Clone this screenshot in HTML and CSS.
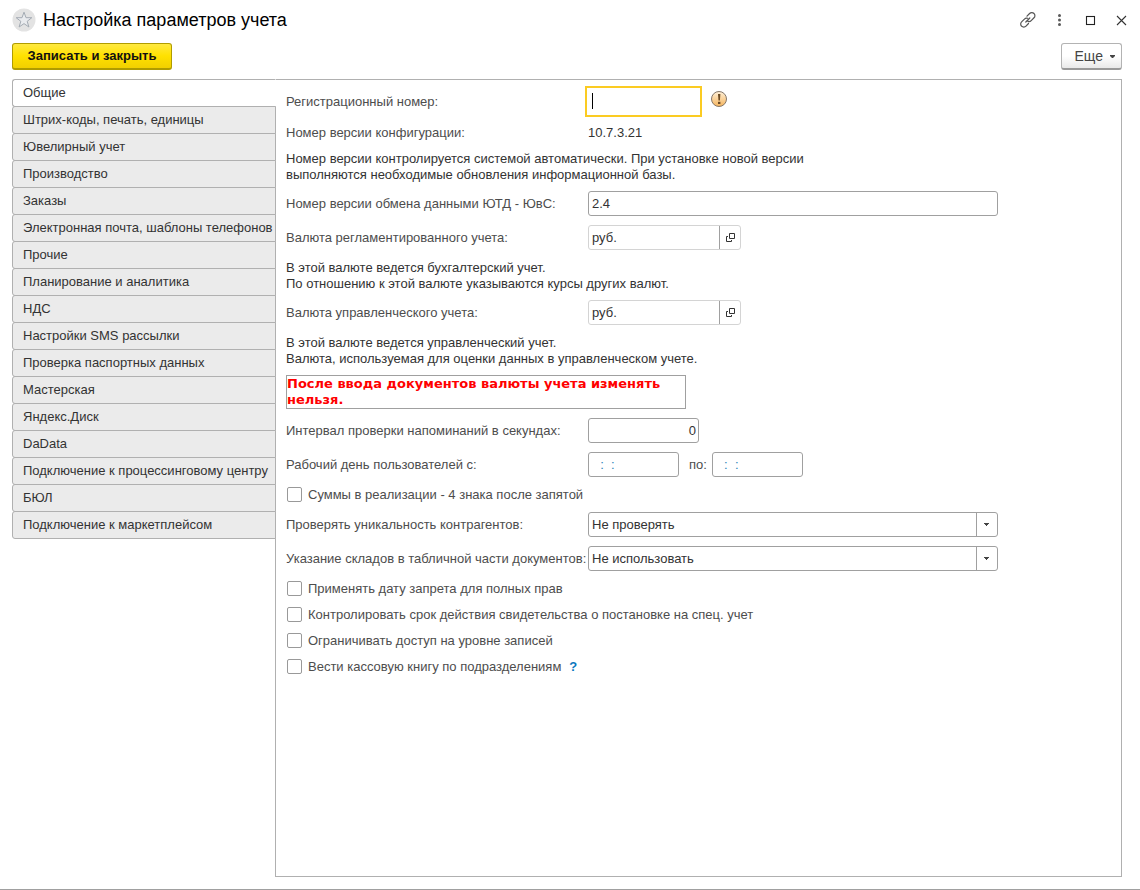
FILE: index.html
```html
<!DOCTYPE html>
<html lang="ru">
<head>
<meta charset="utf-8">
<title>Настройка параметров учета</title>
<link rel="stylesheet" href="styles.css">
</head>
<body>
<div class="window">
  <header class="titlebar">
    <button class="star" type="button" aria-label="Избранное">
      <svg width="24" height="24" viewBox="0 0 24 24"><circle cx="12" cy="12" r="11.5" fill="#e3e3e3"/><path d="M12 4.200l2 5.500h5.800l-4.600 3.600 1.700 5.700-4.900-3.400-4.900 3.400 1.700-5.700-4.600-3.600H10z" fill="#e9ebee" stroke="#a4abb3" stroke-width="1"/></svg>
    </button>
    <h1 class="title">Настройка параметров учета</h1>
    <div class="window-tools">
      <button type="button" class="tool" aria-label="Ссылка">
        <svg width="18" height="18" viewBox="0 0 18 18" fill="none" stroke="#555" stroke-width="1.2" stroke-linecap="round"><path d="M8 5.200l2.600-2.700a3 3 0 0 1 4.400 0a3 3 0 0 1 0 4.300L12.200 9.600a3 3 0 0 1-3.200.8M9.500 12.500L7 15.200a3 3 0 0 1-4.400 0a3 3 0 0 1 0-4.300L5.400 8.100a3 3 0 0 1 3.200-.8M6.800 11l4-4"/></svg>
      </button>
      <button type="button" class="tool" aria-label="Меню">
        <svg width="18" height="18" viewBox="0 0 18 18" fill="#5a5a5a"><circle cx="9.500" cy="4.500" r="1.500"/><circle cx="9.500" cy="9" r="1.500"/><circle cx="9.500" cy="13.500" r="1.500"/></svg>
      </button>
      <button type="button" class="tool" aria-label="Развернуть">
        <svg width="18" height="18" viewBox="0 0 18 18" fill="none" stroke="#222"><rect x="5.500" y="5.500" width="8" height="8" stroke-width="1.100"/></svg>
      </button>
      <button type="button" class="tool" aria-label="Закрыть">
        <svg width="18" height="18" viewBox="0 0 18 18" fill="none" stroke="#333" stroke-width="1.100"><path d="M5 5l9 9M14 5l-9 9"/></svg>
      </button>
    </div>
  </header>

  <div class="commands">
    <button type="button" class="btn btn-primary">Записать и закрыть</button>
    <button type="button" class="btn btn-more">Еще <svg width="5" height="3" viewBox="0 0 5 3" fill="#444"><path d="M0 0h5v1L3 3H2L0 1z"/></svg></button>
  </div>

  <main class="content">
    <nav class="tabs">
      <button type="button" class="tab tab-active">Общие</button>
      <button type="button" class="tab">Штрих-коды, печать, единицы</button>
      <button type="button" class="tab">Ювелирный учет</button>
      <button type="button" class="tab">Производство</button>
      <button type="button" class="tab">Заказы</button>
      <button type="button" class="tab">Электронная почта, шаблоны телефонов</button>
      <button type="button" class="tab">Прочие</button>
      <button type="button" class="tab">Планирование и аналитика</button>
      <button type="button" class="tab">НДС</button>
      <button type="button" class="tab">Настройки SMS рассылки</button>
      <button type="button" class="tab">Проверка паспортных данных</button>
      <button type="button" class="tab">Мастерская</button>
      <button type="button" class="tab">Яндекс.Диск</button>
      <button type="button" class="tab">DaData</button>
      <button type="button" class="tab">Подключение к процессинговому центру</button>
      <button type="button" class="tab">БЮЛ</button>
      <button type="button" class="tab">Подключение к маркетплейсом</button>
    </nav>

    <form class="panel">
      <div class="row">
        <label class="label" for="reg">Регистрационный номер:</label>
        <span class="focus-field"><input class="focus-input" id="reg" type="text"></span>
        <svg class="warn" width="18" height="18" viewBox="0 0 18 18">
          <defs><linearGradient id="wg" x1="0" y1="0" x2="0" y2="1"><stop offset="0" stop-color="#fff0d8"/><stop offset="1" stop-color="#f5b45c"/></linearGradient></defs>
          <circle cx="9" cy="9" r="7.5" fill="url(#wg)" stroke="#85776a"/>
          <path d="M8 4h2.400L9.900 10.600H8.500z" fill="#6b4a24"/><rect x="8" y="11.800" width="2.400" height="2.200" fill="#6b4a24"/>
        </svg>
      </div>
      <div class="row row-text">
        <span class="label">Номер версии конфигурации:</span>
        <span>10.7.3.21</span>
      </div>
      <p class="note">Номер версии контролируется системой автоматически. При установке новой версии<br>выполняются необходимые обновления информационной базы.</p>
      <div class="row">
        <label class="label" for="exch">Номер версии обмена данными ЮТД - ЮвС:</label>
        <input class="field field-wide" id="exch" type="text" value="2.4">
      </div>
      <div class="row">
        <label class="label" for="cur1">Валюта регламентированного учета:</label>
        <span class="picker"><input class="picker-input" id="cur1" type="text" value="руб."><button class="picker-open" type="button" aria-label="Открыть"><svg width="9" height="9" viewBox="0 0 9 9" fill="none" stroke="#333"><path d="M3.5 0.5h5v5h-5zM2 3.5H0.5v5h5V7"/></svg></button></span>
      </div>
      <p class="note">В этой валюте ведется бухгалтерский учет.<br>По отношению к этой валюте указываются курсы других валют.</p>
      <div class="row">
        <label class="label" for="cur2">Валюта управленческого учета:</label>
        <span class="picker"><input class="picker-input" id="cur2" type="text" value="руб."><button class="picker-open" type="button" aria-label="Открыть"><svg width="9" height="9" viewBox="0 0 9 9" fill="none" stroke="#333"><path d="M3.5 0.5h5v5h-5zM2 3.5H0.5v5h5V7"/></svg></button></span>
      </div>
      <p class="note">В этой валюте ведется управленческий учет.<br>Валюта, используемая для оценки данных в управленческом учете.</p>
      <p class="alert">После ввода документов валюты учета изменять нельзя.</p>
      <div class="row">
        <label class="label" for="interval">Интервал проверки напоминаний в секундах:</label>
        <input class="field field-number" id="interval" type="text" value="0">
      </div>
      <div class="row">
        <label class="label" for="from">Рабочий день пользователей с:</label>
        <input class="field field-time" id="from" type="text" value="  :  :">
        <label class="label-to" for="to">по:</label>
        <input class="field field-time" id="to" type="text" value="  :  :">
      </div>
      <label class="check"><input type="checkbox">Суммы в реализации - 4 знака после запятой</label>
      <div class="row">
        <label class="label" for="uniq">Проверять уникальность контрагентов:</label>
        <select class="field field-wide select" id="uniq"><option>Не проверять</option></select>
      </div>
      <div class="row">
        <label class="label" for="stock">Указание складов в табличной части документов:</label>
        <select class="field field-wide select" id="stock"><option>Не использовать</option></select>
      </div>
      <label class="check"><input type="checkbox">Применять дату запрета для полных прав</label>
      <label class="check"><input type="checkbox">Контролировать срок действия свидетельства о постановке на спец. учет</label>
      <label class="check"><input type="checkbox">Ограничивать доступ на уровне записей</label>
      <div class="check-line">
        <label class="check"><input type="checkbox">Вести кассовую книгу по подразделениям</label>
        <a class="help" href="#">?</a>
      </div>
    </form>
  </main>
</div>
</body>
</html>
```
FILE: styles.css
```css
* {
  box-sizing: border-box;
}

body {
  margin: 0;
  background: #fff;
  color: #333;
  font: 13px/16px "Liberation Sans", Arial, sans-serif;
}

button,
input,
select {
  margin: 0;
  font: inherit;
  color: inherit;
}

.window {
  display: flex;
  flex-direction: column;
  min-height: 100vh;
  padding: 8px 18px 12px 12px;
  border-bottom: 1px solid #a0a0a0;
}

.titlebar {
  display: flex;
  align-items: center;
  height: 24px;
}

.star,
.tool {
  display: flex;
  padding: 0;
  border: 0;
  background: none;
}

.title {
  margin: 0 0 0 7px;
  color: #000;
  font-size: 18px;
  font-weight: 400;
  line-height: 24px;
}

.window-tools {
  display: flex;
  gap: 13px;
  margin-left: auto;
  margin-right: -8px;
}

.commands {
  display: flex;
  justify-content: space-between;
  margin: 11px 0 9px;
}

.btn {
  height: 27px;
  border: 1px solid #b3b3b3;
  border-bottom: 2px solid #999;
  border-radius: 3px;
}

.btn-primary {
  min-width: 160px;
  padding: 0 12px;
  border-color: #b09c00;
  background: linear-gradient(#ffe940, #ffe100 50%, #f2d000);
  color: #111;
  font-weight: 700;
}

.btn-more {
  display: flex;
  align-items: center;
  gap: 7px;
  padding: 0 6px 0 13px;
  background: linear-gradient(#fff 50%, #e9e9e9);
  color: #444;
  font-size: 14px;
}

.content {
  display: flex;
  flex: 1;
}

.tabs {
  z-index: 1;
  display: flex;
  flex-direction: column;
  flex: none;
  width: 264px;
  margin-right: -1px;
}

.tab {
  height: 28px;
  margin-bottom: -1px;
  padding: 0 0 0 10px;
  border: 1px solid #b0b0b0;
  border-radius: 3px 0 0 3px;
  background: #ebebeb;
  text-align: left;
  white-space: nowrap;
}

.tab-active {
  border-right-color: #fff;
  background: #fff;
}

.panel {
  display: flex;
  flex-direction: column;
  align-items: flex-start;
  flex: 1;
  gap: 9px;
  min-width: 0;
  padding: 9px 10px;
  border: 1px solid #b0b0b0;
}

.row {
  display: flex;
  align-items: center;
  width: 100%;
  min-height: 25px;
}

.row-text {
  min-height: 18px;
  padding-top: 2px;
}

.label {
  flex: none;
  width: 302px;
  color: #4d4d4d;
  white-space: nowrap;
}

.note {
  margin: 0 0 -1px;
  padding-top: 1px;
}

.field {
  height: 25px;
  padding: 0 3px;
  border: 1px solid #a0a0a0;
  border-radius: 3px;
  background: #fff;
}

.field-wide {
  flex: 1;
  max-width: 410px;
}

.field-number {
  width: 111px;
  padding-right: 2px;
  text-align: right;
}

.field-time {
  width: 91px;
  padding-left: 4px;
  color: #2f83b8;
  white-space: pre;
}

.label-to {
  padding: 0 5px 0 10px;
  color: #4d4d4d;
}

.focus-field {
  position: relative;
  display: flex;
  margin: -3px 0 -3px -3px;
}

.focus-field::after {
  position: absolute;
  top: 7px;
  left: 7px;
  width: 1px;
  height: 16px;
  background: #000;
  content: "";
}

.focus-input {
  width: 117px;
  height: 31px;
  padding: 0 5px;
  border: 2px solid #fbcb22;
  outline: 0;
}

.warn {
  margin: 0 0 6px 8px;
}

.picker {
  display: flex;
  width: 153px;
  height: 25px;
  border: 1px solid #d4d4d4;
  border-radius: 3px;
}

.picker-input {
  flex: 1;
  min-width: 0;
  padding: 0 3px;
  border: 0;
  background: none;
}

.picker-open {
  display: flex;
  align-items: center;
  justify-content: center;
  width: 21px;
  padding: 0;
  border: 0;
  border-left: 1px solid #a0a0a0;
  background: none;
}

.alert {
  width: 400px;
  margin: 0;
  border: 1px solid #a0a0a0;
  color: #f00;
  font: 700 13px/16px "DejaVu Sans", Verdana, sans-serif;
}

.select {
  padding-right: 24px;
  appearance: none;
  background:
    linear-gradient(#444, #444) right 8px top 10px / 5px 1px no-repeat,
    linear-gradient(#444, #444) right 9px top 11px / 3px 1px no-repeat,
    linear-gradient(#444, #444) right 10px top 12px / 1px 1px no-repeat,
    linear-gradient(#a0a0a0, #a0a0a0) right 20px top / 1px 100% no-repeat,
    #fff;
}

.check {
  display: flex;
  align-items: center;
  gap: 6px;
  height: 17px;
  padding-left: 1px;
  color: #4d4d4d;
}

.check input {
  width: 15px;
  height: 15px;
  appearance: none;
  border: 1px solid #999;
  border-radius: 2px;
  background: #fff;
}

.check-line {
  display: flex;
  align-items: center;
  gap: 8px;
}

.help {
  color: #0a78be;
  font-weight: 700;
  text-decoration: none;
}
```
